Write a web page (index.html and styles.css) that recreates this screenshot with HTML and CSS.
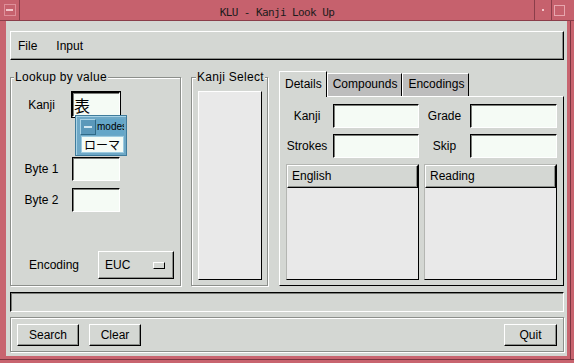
FILE: index.html
```html
<!DOCTYPE html>
<html lang="en">
<head>
    <meta charset="UTF-8">
    <title>KLU - Kanji Look Up</title>
    <link rel="stylesheet" href="styles.css">
</head>
<body>
    <div class="window">
        <!-- window manager title bar -->
        <div class="titlebar">
            <div class="tb-menu"><span class="tb-square"><span class="tb-dash"></span></span></div>
            <div class="tb-title">KLU - Kanji Look Up</div>
            <div class="tb-iconify"><span class="tb-dot"></span></div>
            <div class="tb-maximize"><span class="tb-box"></span></div>
        </div>

        <div class="client">
            <div class="menubar">
                <span class="menu-item">File</span>
                <span class="menu-item">Input</span>
            </div>

            <div class="main">
                <!-- lookup by value -->
                <div class="group lookup">
                    <div class="group-title">Lookup by value</div>
                    <div class="field-row kanji-row">
                        <label class="field-label">Kanji</label>
                        <input class="entry entry-small kanji-entry" type="text" value="表">
                    </div>
                    <div class="field-row byte1-row">
                        <label class="field-label">Byte 1</label>
                        <input class="entry entry-small" type="text">
                    </div>
                    <div class="field-row byte2-row">
                        <label class="field-label">Byte 2</label>
                        <input class="entry entry-small" type="text">
                    </div>
                    <div class="encoding-row">
                        <span class="encoding-label">Encoding</span>
                        <button class="btn option-btn">EUC<span class="option-mark"></span></button>
                    </div>
                </div>

                <!-- kanji select -->
                <div class="group kanji-select">
                    <div class="group-title">Kanji Select</div>
                    <div class="select-list"></div>
                </div>

                <!-- notebook -->
                <div class="notebook">
                    <div class="tabs">
                        <span class="tab active">Details</span>
                        <span class="tab">Compounds</span>
                        <span class="tab">Encodings</span>
                    </div>
                    <div class="tab-panel">
                        <div class="details-grid">
                            <span class="grid-label first-col">Kanji</span>
                            <input class="entry" type="text">
                            <span class="grid-label">Grade</span>
                            <input class="entry" type="text">
                            <span class="grid-label first-col">Strokes</span>
                            <input class="entry" type="text">
                            <span class="grid-label">Skip</span>
                            <input class="entry" type="text">
                        </div>
                        <div class="lists">
                            <div class="list"><div class="list-head">English</div></div>
                            <div class="list"><div class="list-head">Reading</div></div>
                        </div>
                    </div>
                </div>
            </div>

            <div class="status"></div>

            <div class="buttonbar">
                <button class="btn search-btn">Search</button>
                <button class="btn clear-btn">Clear</button>
                <button class="btn quit-btn">Quit</button>
            </div>
        </div>

        <!-- input method status window, floats over the form -->
        <div class="ime-status">
            <div class="ime-top">
                <span class="ime-btn"><span class="ime-dash"></span></span>
                <span class="ime-mode">modes</span>
            </div>
            <div class="ime-conv">ローマ</div>
        </div>
    </div>
</body>
</html>
```

FILE: styles.css
```css
body {
    margin: 0;
    background: #d4d7d3;
    font-family: "Liberation Sans", Arial, sans-serif;
    font-size: 12px;
    color: #000;
}

.window {
    position: relative;
    width: 574px;
    height: 363px;
    box-sizing: border-box;
    display: flex;
    flex-direction: column;
    padding-bottom: 7px;
    background: #c8646f;
    box-shadow: inset 0 -3px 0 #c8646f, inset 0 -4px 0 #7b3640,
                inset -3px 0 0 #c8646f, inset -4px 0 0 #7b3640;
}

/* title bar */
.titlebar {
    display: flex;
    height: 20px;
    overflow: hidden;
    border-bottom: 1px solid #8a3e4a;
    background: #c6616d;
}

.tb-menu {
    width: 19px;
    border-right: 1px solid #8a3e4a;
    display: flex;
    align-items: center;
    justify-content: center;
}

.tb-square {
    width: 12px;
    height: 12px;
    box-sizing: border-box;
    border: 1px solid #de8f99;
    display: flex;
    align-items: center;
    justify-content: center;
}

.tb-dash {
    width: 7px;
    height: 2px;
    background: #f2c6cb;
}

.tb-title {
    flex: 1;
    text-align: center;
    font-family: "DejaVu Sans Mono", monospace;
    font-size: 11px;
    letter-spacing: -0.6px;
    line-height: 26px;
    color: #1c1c1c;
}

.tb-iconify {
    width: 16px;
    border-left: 1px solid #8a3e4a;
    display: flex;
    align-items: center;
    justify-content: center;
}

.tb-dot {
    width: 2px;
    height: 2px;
    background: #f2c6cb;
}

.tb-maximize {
    width: 20px;
    border-left: 1px solid #8a3e4a;
    padding-left: 2px;
    display: flex;
    align-items: center;
}

.tb-box {
    width: 11px;
    height: 11px;
    box-sizing: border-box;
    border: 1px solid #e7a6ae;
}

/* client area */
.client {
    flex: 1;
    margin: 0 7px 0 6px;
    padding: 10px 3px 4px 4px;
    background: #d4d7d3;
    display: flex;
    flex-direction: column;
}

.menubar {
    height: 29px;
    box-sizing: border-box;
    border: 1px solid;
    border-color: #fff #000 #000 #fff;
    box-shadow: inset -1px -1px 0 #8c8f8b;
    padding-left: 7px;
    display: flex;
    align-items: center;
}

.menu-item {
    margin-right: 19px;
}

.main {
    display: flex;
    height: 215px;
    margin-top: 11px;
}

.group {
    box-sizing: border-box;
    margin-top: 6px;
    border: 1px solid #8c8f8b;
    box-shadow: inset 1px 1px 0 #fff, 1px 1px 0 #fff;
    display: flex;
    flex-direction: column;
}

.group-title {
    align-self: flex-start;
    margin: -7px 0 0 3px;
    padding: 0 1px;
    line-height: 12px;
    letter-spacing: 0.3px;
    white-space: nowrap;
    background: #d4d7d3;
}

.lookup {
    width: 171px;
}

.field-row {
    display: flex;
    align-items: center;
}

.field-label {
    width: 61px;
    text-align: center;
}

.kanji-row {
    margin-top: 9px;
}

.byte1-row {
    margin-top: 40px;
}

.byte2-row {
    margin-top: 7px;
}

.entry {
    box-sizing: border-box;
    margin: 0;
    padding: 0 2px;
    height: 24px;
    border: 1px solid;
    border-color: #000 #fff #fff #000;
    box-shadow: inset 1px 1px 0 #7a7c78;
    background: #f5fbf5;
    font: inherit;
    outline: none;
}

.entry-small {
    width: 48px;
}

.kanji-entry {
    height: 25px;
    padding-left: 1px;
    font-family: "Noto Sans CJK JP", sans-serif;
    font-size: 16px;
    outline: 1px solid #000;
}

.encoding-row {
    margin-top: auto;
    margin-bottom: 6px;
    display: flex;
    align-items: center;
}

.encoding-label {
    width: 69px;
    padding-left: 18px;
}

.btn {
    box-sizing: border-box;
    height: 22px;
    margin: 0;
    padding: 0;
    border: 1px solid;
    border-color: #fff #000 #000 #fff;
    box-shadow: inset -1px -1px 0 #8c8f8b;
    background: #d4d7d3;
    font: inherit;
    color: #000;
}

.option-btn {
    width: 76px;
    height: 28px;
    padding: 0 8px 0 6px;
    display: flex;
    align-items: center;
    justify-content: space-between;
}

.option-mark {
    width: 12px;
    height: 7px;
    box-sizing: border-box;
    border: 1px solid;
    border-color: #fff #000 #000 #fff;
}

.kanji-select {
    width: 77px;
    margin-left: 10px;
    padding: 0 5px 5px 6px;
}

.kanji-select .group-title {
    margin-left: -2px;
}

.select-list {
    flex: 1;
    margin-top: 8px;
    border: 1px solid;
    border-color: #fff #000 #000 #fff;
    background: #e9e9e9;
}

/* notebook */
.notebook {
    width: 285px;
    margin-left: 11px;
    display: flex;
    flex-direction: column;
}

.tabs {
    height: 25px;
    display: flex;
    align-items: flex-end;
}

.tab {
    height: 23px;
    box-sizing: border-box;
    padding: 0 4px 0 5px;
    border: 1px solid;
    border-bottom: none;
    border-color: #fff #000 #000 #fff;
    background: #bdbdbd;
    line-height: 20px;
}

.tab.active {
    height: 26px;
    margin-bottom: -1px;
    position: relative;
    z-index: 1;
    background: #d4d7d3;
    line-height: 24px;
}

.tab-panel {
    flex: 1;
    border: 1px solid;
    border-color: #fff #000 #000 #fff;
    padding: 7px 6px 5px 6px;
    display: flex;
    flex-direction: column;
}

.details-grid {
    display: grid;
    grid-template-columns: 47px 86px 51px 87px;
    grid-template-rows: 24px 24px;
    row-gap: 6px;
    align-items: center;
}

.grid-label {
    text-align: center;
}

.grid-label.first-col {
    padding-right: 5px;
}

.lists {
    flex: 1;
    margin-top: 6px;
    display: flex;
    gap: 5px;
}

.list {
    flex: 1;
    border: 1px solid;
    border-color: #b4b6b2 #000 #000 #b4b6b2;
    background: #e9e9e9;
}

.list-head {
    height: 23px;
    box-sizing: border-box;
    border: 1px solid;
    border-color: #fff #000 #000 #fff;
    box-shadow: inset -1px -1px 0 #8c8f8b;
    background: #d4d7d3;
    padding-left: 4px;
    line-height: 21px;
}

/* bottom */
.status {
    height: 20px;
    margin-top: 6px;
    box-sizing: border-box;
    border: 1px solid;
    border-color: #000 #fff #fff #000;
    box-shadow: inset 1px 1px 0 #7a7c78;
}

.buttonbar {
    height: 35px;
    margin-top: 5px;
    box-sizing: border-box;
    border: 1px solid #8c8f8b;
    box-shadow: inset 1px 1px 0 #fff, 1px 1px 0 #fff;
    padding: 6px 6px 0 6px;
    display: flex;
    gap: 10px;
}

.search-btn {
    width: 62px;
}

.clear-btn {
    width: 52px;
}

.quit-btn {
    width: 53px;
    margin-left: auto;
}

/* IME status popup */
.ime-status {
    position: absolute;
    left: 75px;
    top: 115px;
    width: 52px;
    height: 41px;
    box-sizing: border-box;
    border: 1px solid #3f7c9c;
    box-shadow: inset 1px 1px 0 #a9d3e6;
    background: #6ea8c6;
    padding: 3px 2px 2px 4px;
}

.ime-top {
    display: flex;
    height: 16px;
}

.ime-btn {
    width: 16px;
    box-sizing: border-box;
    border: 1px solid;
    border-color: #a9d3e6 #2f6a88 #2f6a88 #a9d3e6;
    background: #5a98ba;
    display: flex;
    align-items: center;
    justify-content: center;
}

.ime-dash {
    width: 8px;
    height: 2px;
    background: #cfe6f1;
}

.ime-mode {
    flex: 1;
    overflow: hidden;
    white-space: nowrap;
    background: #64a6c8;
    font-size: 10px;
    line-height: 16px;
    padding-left: 1px;
}

.ime-conv {
    height: 17px;
    margin: 1px 0 0 1px;
    box-sizing: border-box;
    border: 1px solid #9ccbe0;
    background: #f4fbf6;
    padding-left: 2px;
    font-family: "Noto Sans CJK JP", sans-serif;
    font-size: 12px;
    line-height: 15px;
}
```
